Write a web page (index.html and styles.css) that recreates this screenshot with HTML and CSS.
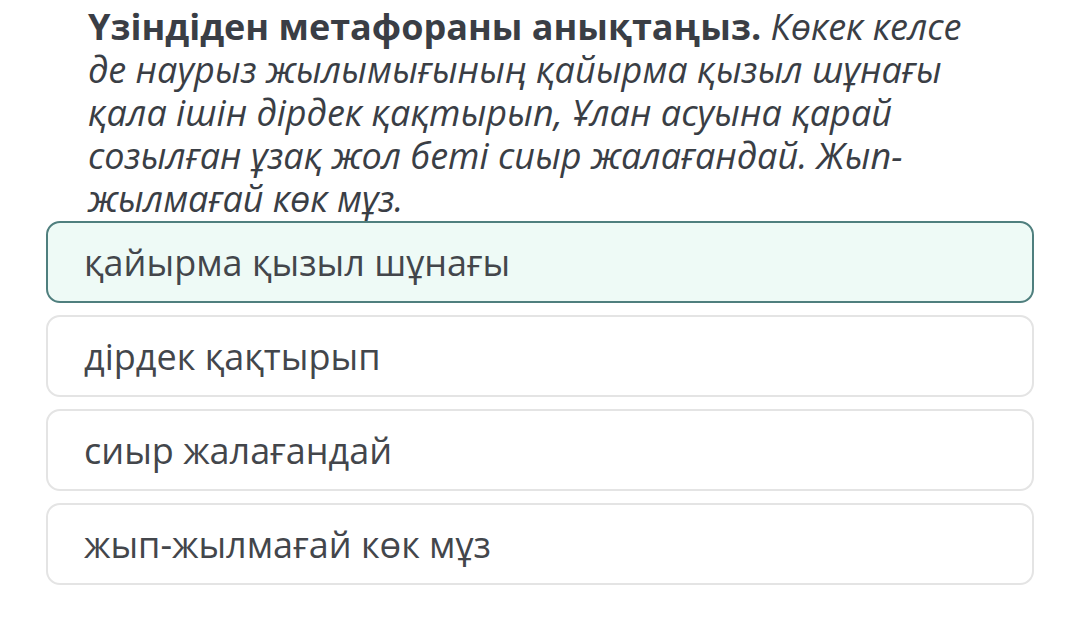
FILE: index.html
```html
<!DOCTYPE html>
<html lang="kk">
<head>
<meta charset="utf-8">
<link rel="stylesheet" href="styles.css">
</head>
<body>
<div class="quiz">
  <p class="question"><b>Үзіндіден метафораны анықтаңыз.</b> <i>Көкек келсе де наурыз жылымығының қайырма қызыл шұнағы қала ішін дірдек қақтырып, Ұлан асуына қарай созылған ұзақ жол беті сиыр жалағандай. Жып-жылмағай көк мұз.</i></p>
  <div class="options">
    <div class="option selected">қайырма қызыл шұнағы</div>
    <div class="option">дірдек қақтырып</div>
    <div class="option">сиыр жалағандай</div>
    <div class="option">жып-жылмағай көк мұз</div>
  </div>
</div>
</body>
</html>
```

FILE: styles.css
```css
html, body {
  margin: 0;
  padding: 0;
  background: #ffffff;
}
.quiz {
  padding-top: 5px;
  font-family: "Open Sans", "Noto Sans", sans-serif;
}
.question {
  margin: 0 0 0 88px;
  width: 882px;
  font-size: 36px;
  line-height: 43px;
  color: #3a3e45;
}
.question b {
  font-weight: 700;
}
.question i {
  font-style: italic;
}
.options {
  margin-top: 1px;
  margin-left: 46px;
  width: 988px;
  display: flex;
  flex-direction: column;
  gap: 12px;
}
.option {
  box-sizing: border-box;
  height: 82px;
  border: 2px solid #e4e4e4;
  border-radius: 14px;
  padding-left: 36px;
  display: flex;
  align-items: center;
  font-size: 36px;
  color: #43464b;
  background: #ffffff;
}
.option.selected {
  border-color: #4f7f7e;
  background: #eefaf6;
}
```
